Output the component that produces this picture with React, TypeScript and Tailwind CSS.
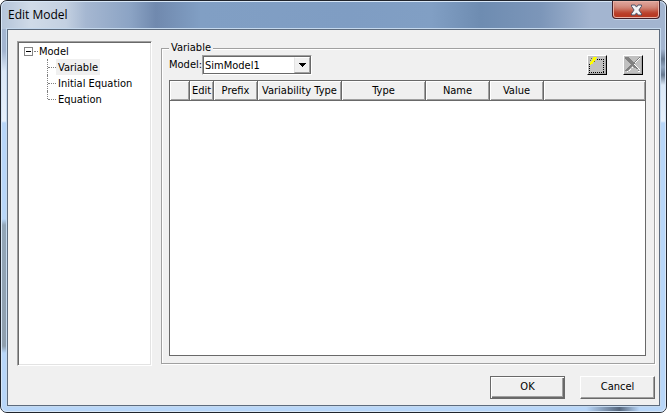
import { useState } from "react";

const columns = [
  { label: "", width: "w-5" },
  { label: "Edit", width: "w-6" },
  { label: "Prefix", width: "w-11" },
  { label: "Variability Type", width: "w-21" },
  { label: "Type", width: "w-21" },
  { label: "Name", width: "w-16" },
  { label: "Value", width: "w-[54px]" },
  { label: "", width: "" },
];

const pages = ["Variable", "Initial Equation", "Equation"];

function TitleBar() {
  return (
    <header className="flex h-7 items-start justify-between">
      <h1 className="pt-1 pl-px font-['Open_Sans',sans-serif] text-xs leading-5 text-black">Edit Model</h1>
      <button
        type="button"
        aria-label="Close"
        className="flex h-[18px] w-12 items-center justify-center rounded-b-[4px] border border-t-0 border-[#43202a] bg-linear-to-b from-[#dfa79e] from-0% via-[#cf8375] via-45% to-[#c9604c] shadow-[inset_0_0_0_1px_#e9b3a8,inset_0_-8px_4px_-1px_#b83a24,0_1px_0_#c9d6e6]"
      >
        <svg width="13" height="12" viewBox="0 0 13 12">
          <path
            d="M1.5 1h3.4l1.6 2.1L8.1 1h3.4v1.3L8.9 6l2.6 3.7V11H8.1L6.5 8.9 4.9 11H1.5V9.7L4.1 6 1.5 2.3z"
            fill="#f4f4f6"
            stroke="#4e5468"
          />
        </svg>
      </button>
    </header>
  );
}

function ModelTree({ page, onSelect }: { page: string; onSelect: (page: string) => void }) {
  const [open, setOpen] = useState(true);
  return (
    <nav
      aria-label="Model sections"
      className="w-[135px] shrink-0 border border-t-[#a0a0a0] border-r-white border-b-white border-l-[#a0a0a0] bg-white pt-px shadow-[inset_1px_1px_0_#696969,inset_-1px_-1px_0_#e3e3e3]"
    >
      <div className="flex h-4 items-center pt-px pl-1.5">
        <button
          type="button"
          aria-label="Toggle Model"
          aria-expanded={open}
          onClick={() => setOpen(!open)}
          className="block size-[9px]"
        >
          <svg width="9" height="9" viewBox="0 0 9 9" shapeRendering="crispEdges">
            <path d="M.5.5h8v8h-8z" fill="#fff" stroke="#848484" />
            <path d={open ? "M2 4.5h5" : "M2 4.5h5M4.5 2v5"} stroke="#000" />
          </svg>
        </button>
        <span className="ml-px w-1 border-t border-dotted border-[#808080]" />
        <span className="ml-px pt-px leading-[14px]">Model</span>
      </div>
      {open && (
        <ul>
          {pages.map((name, i) => (
            <li key={name} className="flex h-4 pl-[29px]">
              <span className={`w-0 border-l border-dotted border-[#808080] ${i === pages.length - 1 ? "h-2" : "h-4"}`} />
              <span className="mt-2 h-0 w-2 border-t border-dotted border-[#808080]" />
              <button
                type="button"
                onClick={() => onSelect(name)}
                className={`h-4 px-0.5 pt-0.5 leading-[14px] ${page === name ? "bg-[#f0f0f0]" : ""}`}
              >
                {name}
              </button>
            </li>
          ))}
        </ul>
      )}
    </nav>
  );
}

function ToolButton({ label, children }: { label: string; children: React.ReactNode }) {
  return (
    <button
      type="button"
      aria-label={label}
      className="size-5 border border-t-white border-r-black border-b-black border-l-white bg-[#c0c0c0] shadow-[inset_-1px_-1px_0_#a8a8a8]"
    >
      <svg width="18" height="18" viewBox="0 0 18 18" shapeRendering="crispEdges">
        {children}
      </svg>
    </button>
  );
}

function Toolbar() {
  return (
    <div className="flex items-start justify-between pr-[3px]">
      <div className="flex items-center">
        <label htmlFor="model" className="leading-4">
          Model:
        </label>
        <div className="relative">
          <select
            id="model"
            className="block h-5 w-[110px] appearance-none border border-t-[#a0a0a0] border-r-white border-b-white border-l-[#a0a0a0] bg-white pt-px pl-0.5 leading-4 shadow-[inset_1px_1px_0_#696969,inset_-1px_-1px_0_#696969] outline-none"
          >
            <option>SimModel1</option>
          </select>
          <span className="pointer-events-none absolute top-0.5 right-0.5 flex h-4 w-4 items-center justify-center border border-t-white border-r-[#a0a0a0] border-b-[#a0a0a0] border-l-[#e3e3e3] bg-[#f0f0f0]">
            <svg width="7" height="4" viewBox="0 0 7 4" shapeRendering="crispEdges">
              <path d="M0 0h7v1H0zM1 1h5v1H1zM2 2h3v1H2zM3 3h1v1H3z" />
            </svg>
          </span>
        </div>
      </div>
      <div className="flex gap-4">
        <ToolButton label="New">
          <path d="M9 3.5h7" stroke="#000" strokeDasharray="1 1" />
          <path d="M15.5 3v14" stroke="#000" strokeDasharray="1 1" />
          <path d="M1 16.5h15" stroke="#000" strokeDasharray="1 1" />
          <path d="M1.5 8v9" stroke="#000" strokeDasharray="1 1" />
          <path d="M5 1h4v1H8v2H7v1H6v1H5v2H3v1H2V6h1V5h1V3h1z" fill="#ff0" />
          <path d="M3 2h1v1H3zM2 4h1v1H2zM6 5h1v1H6z" fill="#808000" />
        </ToolButton>
        <ToolButton label="Delete">
          <path
            d="M15 2h1v1h-1zM14 3h1v1h-1zM13 4h1v1h-1zM12 5h1v1h-1zM11 6h1v1h-1zM10 8h1v1h-1zM11 9h1v1h-1zM12 10h1v1h-1zM13 11h1v1h-1zM14 12h1v1h-1zM3 15h1v1H3zM5 14h1v1H5zM6 13h1v1H6zM8 11h1v1H8zM15 13h1v1h-1zM14 15h2v1h-2z"
            fill="#fff"
          />
          <path
            d="M1 1h4v1H1zM1 2h5v1H1zM2 3h5v1H2zM3 4h5v1H3zM4 5h5v1H4zM5 6h5v1H5zM6 7h5v1H6zM7 8h3v1H7zM6 9h5v1H6zM5 10h3v1H5zM9 10h3v1H9zM4 11h3v1H4zM10 11h3v1h-3zM3 12h3v1H3zM12 12h2v1h-2zM2 13h3v1H2zM1 14h3v1H1zM14 14h1v1h-1zM10 6h1v1h-1zM11 5h1v1h-1zM12 4h1v1h-1zM13 3h1v1h-1zM14 2h1v1h-1zM15 1h1v1h-1z"
            fill="#808080"
          />
        </ToolButton>
      </div>
    </div>
  );
}

function VariableTable() {
  return (
    <div className="mt-[5px] grow border border-[#696969] bg-white">
      <table className="w-full table-fixed border-separate border-spacing-0">
        <thead>
          <tr>
            {columns.map(({ label, width }, i) => (
              <th
                key={i}
                scope="col"
                className={`h-5 border-r border-b border-[#696969] bg-[#f0f0f0] p-0 text-center leading-4 font-normal whitespace-nowrap shadow-[inset_1px_1px_0_#fff,inset_-1px_-1px_0_#a0a0a0] last:border-r-0 ${width}`}
              >
                {label}
              </th>
            ))}
          </tr>
        </thead>
        <tbody />
      </table>
    </div>
  );
}

export default function App() {
  const [page, setPage] = useState("Variable");
  return (
    <div className="flex min-h-screen flex-col rounded-[7px] border border-[#20242c] bg-[linear-gradient(to_bottom,#a3b5d0_0,#a3b5d0_50px,#dbe8f7_70px,#e6f0fb_120px,#b8d6f8_122px,#b8d6f8_218px,#93a6b8_224px,#8f9fae_345px,#b8d6f8_352px),linear-gradient(to_bottom,#a3b5d0_0,#a3b5d0_48px,#66788f_58px,#8fa3bd_66px,#66788f_74px,#dbe8f7_84px,#e6f0fb_120px,#b8d6f8_122px)] bg-[length:50%_100%,50%_100%] bg-[position:0_0,100%_0] bg-no-repeat font-['DejaVu_Sans_Condensed','DejaVu_Sans',sans-serif] text-[11px] text-black">
      <div className="flex grow flex-col rounded-[6px] bg-[linear-gradient(to_right,#b4c4d9_0,#d0dbe8_30px,#c3d0e1_65px,#a5b7d1_85px,#8ba3c4_130px,#7089ae_155px,#819fc4_200px,#7f9dc3_350px,#819fc4_430px,#6e8cb1_480px,#7c96b9_540px,#a3b5d0_590px,#a3b5d0_100%),linear-gradient(to_right,#b8d6f8_0,#b8d6f8_88%,#56677d_93%,#b8d6f8_96%)] bg-[length:100%_28px,100%_7px] bg-[position:0_0,0_100%] bg-no-repeat px-1.5 pb-1.5 shadow-[inset_0_0_0_1px_#d8e7f7]">
        <TitleBar />
        <main className="flex grow flex-col border border-[#5d6b7d] bg-[#f0f0f0] pt-[11px] pr-1 pb-1.5 pl-[9px] shadow-[0_0_0_1px_#c5d9ee]">
          <div className="flex grow gap-[9px]">
            <ModelTree page={page} onSelect={setPage} />
            <fieldset className="mb-0.5 flex min-w-0 grow flex-col border border-[#a0a0a0] pr-2 pb-[7px] pl-[7px] shadow-[1px_1px_0_#fff,inset_1px_1px_0_#fff]">
              <legend className="bg-[#f0f0f0] px-0.5 leading-[14px]">{page}</legend>
              <Toolbar />
              <VariableTable />
            </fieldset>
          </div>
          <footer className="mt-2.5 flex justify-end gap-[15px]">
            <button
              type="submit"
              className="h-[23px] w-[75px] border border-[#696969] shadow-[inset_1px_1px_0_#fff,inset_-1px_-1px_0_#696969,inset_-2px_-2px_0_#a0a0a0]"
            >
              OK
            </button>
            <button
              type="button"
              className="h-[23px] w-[75px] border border-t-white border-r-[#696969] border-b-[#696969] border-l-white shadow-[inset_-1px_-1px_0_#a0a0a0]"
            >
              Cancel
            </button>
          </footer>
        </main>
      </div>
    </div>
  );
}
